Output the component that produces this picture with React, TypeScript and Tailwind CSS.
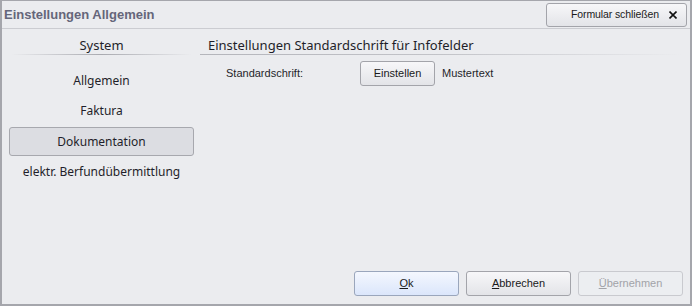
import React from 'react';

const font = { fontFamily: '"Liberation Sans", Arial, sans-serif' };
const uiFont = { fontFamily: '"Noto Sans", "Liberation Sans", sans-serif' };

function Btn({
  children,
  className = '',
  variant = 'normal',
}: {
  children: React.ReactNode;
  className?: string;
  variant?: 'normal' | 'primary' | 'disabled';
}) {
  const look =
    variant === 'primary'
      ? 'border-[#9aa6bc] bg-gradient-to-b from-[#f4f7fe] to-[#dbe6fb] text-[#1a1a1a]'
      : variant === 'disabled'
      ? 'border-[#c9cacf] bg-[#eceef1] text-[#a2a3a8]'
      : 'border-[#a3a4aa] bg-gradient-to-b from-[#f7f7f9] to-[#e3e4e8] text-[#1a1a1a]';
  return (
    <div
      className={`flex items-center justify-center rounded-[3px] border text-[11px] ${look} ${className}`}
    >
      {children}
    </div>
  );
}

const navItems = ['Allgemein', 'Faktura', 'Dokumentation', 'elektr. Berfundübermittlung'];

export default function App() {
  return (
    <div
      className="flex h-[306px] w-[692px] flex-col border-x-2 border-b-2 border-t border-[#a5a6ac] bg-[#ebecef] text-[#1f1f2a]"
      style={font}
    >
      {/* header */}
      <div className="flex h-[28px] items-center justify-between border-b border-[#cbccd1] pl-[2px] pr-[2px]">
        <span className="text-[13px] font-bold text-[#65667a]">Einstellungen Allgemein</span>
        <Btn className="mr-[1px] h-[24px] w-[141px] justify-end gap-[10px] pr-[9px]">
          <span className="text-[10.5px] tracking-[-0.1px]">Formular schließen</span>
          <svg width="8" height="8" viewBox="0 0 8 8">
            <path d="M0.5 0.5L7.5 7.5M7.5 0.5L0.5 7.5" stroke="#111" strokeWidth="1.6" />
          </svg>
        </Btn>
      </div>

      <div className="flex flex-1">
        {/* left nav */}
        <div className="flex w-[198px] flex-col items-stretch pl-[7px] pr-[6px] pt-[8px]" style={uiFont}>
          <div className="text-center text-[13px] leading-[16px]">System</div>
          <div className="mx-[2px] mt-[1px] h-px bg-gradient-to-r from-transparent via-[#a9aab0] to-transparent" />
          <div className="mt-[12px] flex flex-col gap-[2px]">
            {navItems.map((n) =>
              n === 'Dokumentation' ? (
                <div
                  key={n}
                  className="flex h-[29px] items-center justify-center rounded-[3px] border border-[#a7a8ae] bg-[#dcdde2] text-[12px]"
                >
                  {n}
                </div>
              ) : (
                <div key={n} className="flex h-[28px] items-center justify-center text-[12px]">
                  {n}
                </div>
              ),
            )}
          </div>
        </div>

        {/* right content */}
        <div className="flex flex-1 flex-col pr-[8px] pt-[8px]">
          <div className="pl-[8px] text-[13px] leading-[16px]" style={uiFont}>
            Einstellungen Standardschrift für Infofelder
          </div>
          <div className="mt-[1px] h-px bg-gradient-to-r from-[#b4b5bb] via-[#c2c3c8] to-transparent" />
          <div className="mt-[6px] flex items-center pl-[26px]">
            <span className="w-[134px] text-[11px]">Standardschrift:</span>
            <Btn className="h-[25px] w-[75px]">Einstellen</Btn>
            <span className="ml-[7px] text-[11px]">Mustertext</span>
          </div>
        </div>
      </div>

      {/* footer */}
      <div className="flex justify-end gap-[7px] pb-[8px] pr-[7px]">
        <Btn variant="primary" className="h-[25px] w-[105px]">
          <span>
            <span className="underline">O</span>k
          </span>
        </Btn>
        <Btn className="h-[25px] w-[105px]">
          <span>
            <span className="underline">A</span>bbrechen
          </span>
        </Btn>
        <Btn variant="disabled" className="h-[25px] w-[105px]">
          <span>
            <span className="underline">Ü</span>bernehmen
          </span>
        </Btn>
      </div>
    </div>
  );
}
